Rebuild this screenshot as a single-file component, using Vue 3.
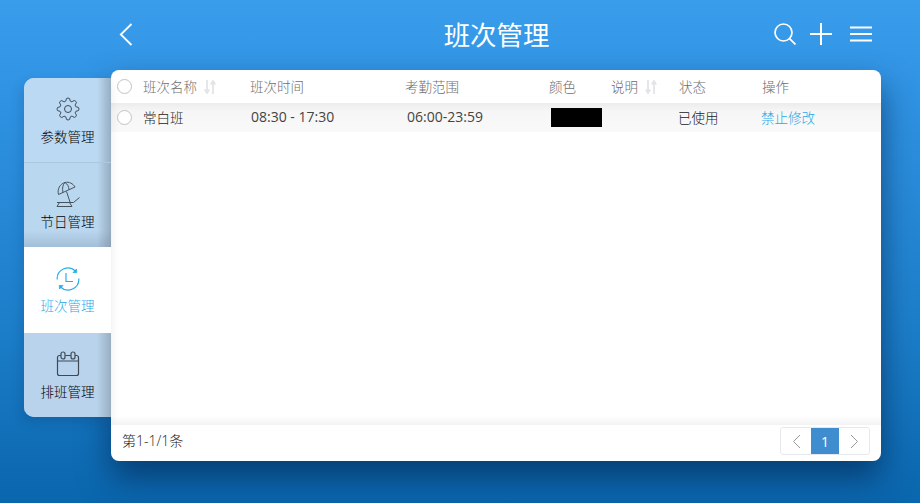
<script setup>
const menu = [
  { key: 'gear', label: '参数管理' },
  { key: 'beach', label: '节日管理' },
  { key: 'clock', label: '班次管理', active: true },
  { key: 'cal', label: '排班管理' },
]
</script>

<template>
  <div class="page">
    <header class="top">
      <svg class="back" width="16" height="26" viewBox="0 0 16 26"><path d="M13.500 3 2.800 13.500 13.500 24" fill="none" stroke="#fff" stroke-width="1.800"/></svg>
      <h1>班次管理</h1>
      <div class="actions">
        <svg width="22" height="22" viewBox="0 0 22 22"><circle cx="9.500" cy="9.500" r="8.500" fill="none" stroke="#fff" stroke-width="1.700"/><path d="M15.600 15.600 21.500 21.500" stroke="#fff" stroke-width="1.700"/></svg>
        <svg width="22" height="22" viewBox="0 0 22 22"><path d="M0 11H22M11 0V22" stroke="#fff" stroke-width="2"/></svg>
        <svg width="22" height="16" viewBox="0 0 22 16"><path d="M0 1.500H22M0 8H22M0 14.500H22" stroke="#fff" stroke-width="2"/></svg>
      </div>
    </header>

    <main class="body">
      <nav class="side">
        <div v-for="m in menu" :key="m.key" class="item" :class="{ on: m.active }">
          <svg v-if="m.key === 'gear'" width="26" height="26" viewBox="-1 -1 26 26" fill="none" stroke="#3c4a58" stroke-width="1">
            <circle cx="12" cy="12" r="3.500"/>
            <path d="M19.400 15a1.650 1.650 0 0 0 .33 1.820l.06.06a2 2 0 0 1 0 2.830 2 2 0 0 1-2.830 0l-.06-.06a1.650 1.650 0 0 0-1.820-.33 1.650 1.650 0 0 0-1 1.510V21a2 2 0 0 1-2 2 2 2 0 0 1-2-2v-.09A1.650 1.650 0 0 0 9 19.400a1.650 1.650 0 0 0-1.820.33l-.06.06a2 2 0 0 1-2.830 0 2 2 0 0 1 0-2.830l.06-.06a1.650 1.650 0 0 0 .33-1.820 1.650 1.650 0 0 0-1.510-1H3a2 2 0 0 1-2-2 2 2 0 0 1 2-2h.09A1.650 1.650 0 0 0 4.600 9a1.650 1.650 0 0 0-.33-1.820l-.06-.06a2 2 0 0 1 0-2.830 2 2 0 0 1 2.830 0l.06.06a1.650 1.650 0 0 0 1.820.33H9a1.650 1.650 0 0 0 1-1.510V3a2 2 0 0 1 2-2 2 2 0 0 1 2 2v.09a1.650 1.650 0 0 0 1 1.510 1.650 1.650 0 0 0 1.820-.33l.06-.06a2 2 0 0 1 2.830 0 2 2 0 0 1 0 2.830l-.06.06a1.650 1.650 0 0 0-.33 1.820V9a1.650 1.650 0 0 0 1.510 1H21a2 2 0 0 1 2 2 2 2 0 0 1-2 2h-.09a1.650 1.650 0 0 0-1.510 1z"/>
          </svg>
          <svg v-else-if="m.key === 'beach'" width="26" height="26" viewBox="0 0 26 26" fill="none" stroke="#46535f" stroke-width="1">
            <path d="M3.500 13.500C2 8 5 3 10 1.500 14 .5 18 2.500 20 6z"/>
            <path d="M8 11.500C7 7.500 7.800 3.500 10 1.500M14 8.500C13.800 5.500 12.500 3 10 1.500"/>
            <path d="M11.500 10.500 15 21"/>
            <path d="M2 21.500H18.500L24.500 16.500"/>
            <path d="M4.500 21.500 2 25.500H17L14.500 21.500"/>
          </svg>
          <svg v-else-if="m.key === 'clock'" class="clock" width="26" height="26" viewBox="0 0 26 26" fill="none" stroke="#29aee8" stroke-width="1.200">
            <path d="M2.200 13.500A10.800 10.800 0 0 1 20.500 5"/>
            <path d="M23.800 12.500A10.800 10.800 0 0 1 5.500 21"/>
            <path d="M11 7V15.500H18"/>
            <path d="M21.500 3 21.800 6.500 18 6.500z" fill="#29aee8" stroke-width=".8"/>
            <path d="M4.500 23 4.200 19.500 8 19.500z" fill="#29aee8" stroke-width=".8"/>
          </svg>
          <svg v-else width="24" height="26" viewBox="0 0 24 26" fill="none" stroke="#3c4a58" stroke-width="1.200">
            <path d="M4.800 4.500H3.500A2 2 0 0 0 1.500 6.500V22.500A2 2 0 0 0 3.500 24.500H20.500A2 2 0 0 0 22.500 22.500V6.500A2 2 0 0 0 20.500 4.500H19.200M9.300 4.500H14.700M1.500 10H22.500"/>
            <rect x="5" y="1" width="4" height="7" rx="2"/>
            <rect x="15" y="1" width="4" height="7" rx="2"/>
          </svg>
          <span>{{ m.label }}</span>
        </div>
      </nav>

      <section class="card">
        <div class="row head">
          <i class="radio"></i>
          <span class="with-sort">班次名称<svg class="sort" width="12" height="14" viewBox="0 0 12 14"><path d="M3 0V12.500M.8 9.500 3 13 5.200 9.500M9 14V1.500M6.800 4.500 9 1 11.200 4.500" fill="none" stroke="#e2e4e6" stroke-width="1.800"/></svg></span>
          <span>班次时间</span>
          <span>考勤范围</span>
          <span>颜色</span>
          <span class="with-sort">说明<svg class="sort" width="12" height="14" viewBox="0 0 12 14"><path d="M3 0V12.500M.8 9.500 3 13 5.200 9.500M9 14V1.500M6.800 4.500 9 1 11.200 4.500" fill="none" stroke="#e2e4e6" stroke-width="1.800"/></svg></span>
          <span>状态</span>
          <span>操作</span>
        </div>
        <div class="row data">
          <i class="radio"></i>
          <span>常白班</span>
          <span class="num n1">08:30 - 17:30</span>
          <span class="num n2">06:00-23:59</span>
          <span class="n3"><b class="swatch"></b></span>
          <span></span>
          <span class="st">已使用</span>
          <a>禁止修改</a>
        </div>
        <div class="spacer"></div>
        <footer class="foot">
          <span class="total">第1-1/1条</span>
          <div class="pager">
            <button><svg width="9" height="15" viewBox="0 0 9 15"><path d="M8 1 1.500 7.500 8 14" fill="none" stroke="#999" stroke-width="1"/></svg></button>
            <button class="cur">1</button>
            <button><svg width="9" height="15" viewBox="0 0 9 15"><path d="M1 1 7.500 7.500 1 14" fill="none" stroke="#999" stroke-width="1"/></svg></button>
          </div>
        </footer>
      </section>
    </main>
  </div>
</template>

<style scoped>
.page {
  width: 920px;
  height: 503px;
  overflow: hidden;
  background: linear-gradient(180deg, #399dec 0%, #2f92e2 20%, #1c7ec9 65%, #0a66ad 100%);
  font-family: "Open Sans", "Noto Sans CJK SC", sans-serif;
  font-size: 13.500px;
  font-weight: 300;
  color: #444;
}
.top {
  position: relative;
  height: 70px;
  display: flex;
  align-items: center;
  justify-content: center;
}
.top h1 {
  margin: 0 0 0 73px;
  padding-bottom: 4px;
  font-size: 26.400px;
  font-weight: 400;
  color: #fff;
}
.back { position: absolute; left: 118px; top: 21px; }
.actions {
  position: absolute;
  left: 774px;
  top: 23px;
  height: 22px;
  display: flex;
  align-items: center;
}
.actions svg:nth-child(2) { margin: 0 18px 0 14px; }
.body { display: flex; padding-left: 24px; align-items: flex-start; }
.side {
  position: relative;
  z-index: 1;
  width: 87px;
  height: 339px;
  margin-top: 8px;
  border-radius: 10px 0 0 10px;
  overflow: hidden;
  background: #bad6ef;
  box-shadow: -3px 5px 12px rgba(0, 40, 90, .16);
}
.item {
  height: 85px;
  box-sizing: border-box;
  padding-top: 18px;
  display: flex;
  flex-direction: column;
  align-items: center;
  color: #000;
  background: linear-gradient(90deg, rgba(120, 135, 150, 0) 84%, rgba(115, 130, 145, .5) 100%), #bcd9f3;
}
.item:nth-child(1) { border-bottom: 1px solid #acc8e0; }
.item:nth-child(2) {
  height: 84px;
  background:
    linear-gradient(180deg, rgba(110, 130, 155, 0) 80%, rgba(110, 130, 155, .3) 100%),
    linear-gradient(90deg, rgba(120, 135, 150, 0) 84%, rgba(115, 130, 145, .5) 100%), #bad7f0;
}
.item:nth-child(4) {
  height: 84px;
  background: linear-gradient(90deg, rgba(120, 135, 150, 0) 84%, rgba(115, 130, 145, .45) 100%), #b8d3eb;
}
.item svg { flex: none; }
.item .clock { margin-top: 1px; margin-bottom: -1px; }
.item span { margin-top: 6px; line-height: 18px; }
.item.on { background: #fff; color: #1fa8e8; height: 86px; }
.card {
  width: 770px;
  height: 391px;
  display: flex;
  flex-direction: column;
  background: #fff;
  border-radius: 8px;
  box-shadow: 0 16px 32px rgba(0, 30, 70, .6);
}
.row {
  display: grid;
  grid-template-columns: 32px 107px 155px 144px 62px 68px 83px 1fr;
  align-items: center;
}
.head { height: 33px; color: #6e6e6e; }
.head > span { padding-bottom: 2px; }
.data {
  height: 29px;
  background: linear-gradient(180deg, #ececec 0, #f6f6f6 8px, #f9f9f9 100%);
  color: #222;
}
.data span, .data a { padding-bottom: 2px; }
.radio {
  width: 15px;
  height: 15px;
  box-sizing: border-box;
  margin-left: 6px;
  border: 1.700px solid #c0c4c4;
  border-radius: 50%;
  background: #fff;
}
.with-sort { display: flex; align-items: center; }
.sort { margin-left: 7px; margin-top: 3px; }
.num { font-size: 14px; font-weight: 400; color: #444; }
.n1 { padding-left: 1px; }
.n2 { padding-left: 2px; }
.data .n3 { padding: 0 0 0 2px; display: flex; }
.swatch { width: 51px; height: 19px; background: #000; }
.data .st { margin-left: -1px; }
.data a { color: #1fa8e8; margin-left: -1px; }
.spacer { flex: 1; }
.foot {
  height: 36px;
  box-sizing: border-box;
  padding: 2px 11px 6px;
  display: flex;
  align-items: center;
  justify-content: space-between;
  position: relative;
  color: #222;
  font-size: 14px;
}
.total { padding-bottom: 2px; }
.foot::before {
  content: "";
  position: absolute;
  left: 0;
  right: 0;
  top: -9px;
  height: 9px;
  background: linear-gradient(180deg, #fff, #f3f3f3);
}
.pager {
  display: flex;
  height: 28px;
  border: 1px solid #e6e9ec;
  border-radius: 3px;
  box-sizing: border-box;
}
.pager button {
  width: 30px;
  padding: 0;
  border: 0;
  background: #fff;
  display: flex;
  align-items: center;
  justify-content: center;
  font: inherit;
}
.pager button:first-child { border-radius: 3px 0 0 3px; }
.pager button:last-child { border-radius: 0 3px 3px 0; }
.pager .cur { width: 28px; background: #3f8ccf; color: #fff; font-size: 14px; font-weight: 400; }
</style>

<style>
html, body { margin: 0; padding: 0; }
</style>
